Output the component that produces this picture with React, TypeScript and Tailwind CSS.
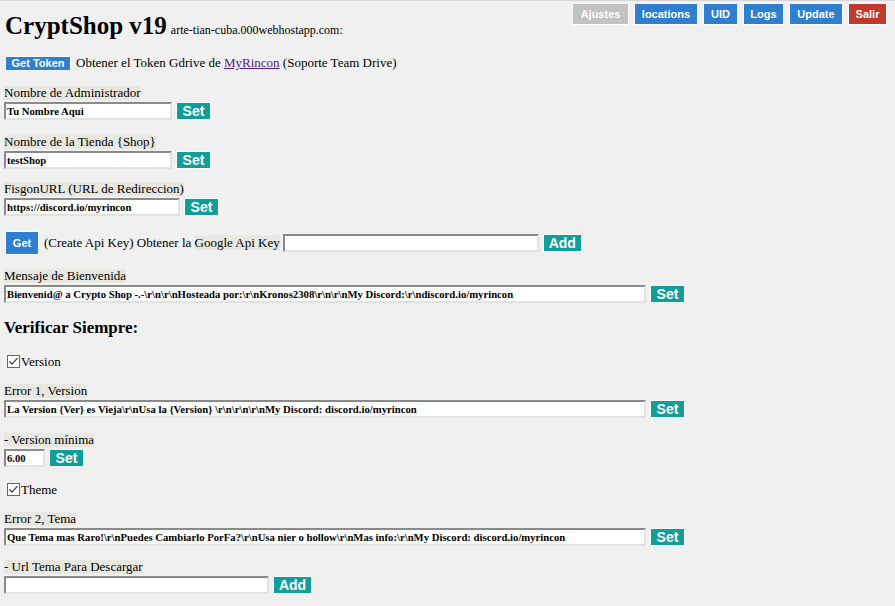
import React from 'react';

const serif = "font-['Liberation_Serif','Times_New_Roman',serif]";
const sans = "font-['Liberation_Sans',Arial,sans-serif]";

function Label({ children }: { children: React.ReactNode }) {
  return (
    <div className="h-[14px] leading-[14px]">
      <span className="bg-[#e8e8e0] inline-block">{children}</span>
    </div>
  );
}

function TextBox({ width, value }: { width: number; value: string }) {
  return (
    <div
      className="h-[18px] bg-white border-2 border-t-[#8a8a8a] border-l-[#8a8a8a] border-r-[#e2e2e2] border-b-[#e2e2e2] text-[10.7px] font-bold leading-[14px] pl-[1px] overflow-hidden whitespace-nowrap"
      style={{ width }}
    >
      {value}
    </div>
  );
}

function TealBtn({ text, w }: { text: string; w: number }) {
  return (
    <button
      className={`${sans} h-[18px] bg-[#0f9e9a] text-white text-[14px] font-bold leading-[16px] border border-white`}
      style={{ width: w }}
    >
      {text}
    </button>
  );
}

function Field({ label, width, value, btn = 'Set', btnW = 35, mt }: { label: string; width: number; value: string; btn?: string; btnW?: number; mt: string }) {
  return (
    <div className={mt}>
      <Label>{label}</Label>
      <div className="flex items-center gap-[4px] mt-[2px]">
        <TextBox width={width} value={value} />
        <TealBtn text={btn} w={btnW} />
      </div>
    </div>
  );
}

function Check({ label, mt }: { label: string; mt: string }) {
  return (
    <div className={`${mt} h-[17px] flex items-center pl-[3px] gap-[1px]`}>
      <svg width="13" height="13" viewBox="0 0 13 13">
        <rect x="0.5" y="0.5" width="12" height="12" fill="#fff" stroke="#6a6a6a" />
        <path d="M2.5 6.5 L5 9 L10.5 3.2" fill="none" stroke="#333" strokeWidth="1.1" />
      </svg>
      <span className="leading-[17px]">{label}</span>
    </div>
  );
}

const topBtns = [
  { t: 'Ajustes', c: 'bg-[#c2c2c2]', w: 57 },
  { t: 'locations', c: 'bg-[#2f7fd1]', w: 64 },
  { t: 'UID', c: 'bg-[#2f7fd1]', w: 35 },
  { t: 'Logs', c: 'bg-[#2f7fd1]', w: 41 },
  { t: 'Update', c: 'bg-[#2f7fd1]', w: 54 },
  { t: 'Salir', c: 'bg-[#c0392b]', w: 39 },
];

export default function App() {
  return (
    <div className={`${serif} min-h-[606px] bg-[#f0f0f0] border-t border-[#d6d6d6] px-[4px] text-[13px] text-black`}>
      {/* header */}
      <div className="h-[54px] flex justify-between items-start">
        <div className="pt-[10px] pl-[1px] flex items-baseline gap-[4px]">
          <h1 className="text-[25px] font-bold leading-[30px]">CryptShop v19</h1>
          <span className="text-[12px]">arte-tian-cuba.000webhostapp.com:</span>
        </div>
        <div className="flex gap-[5px] pt-[2px] pr-[4px]">
          {topBtns.map((b) => (
            <button
              key={b.t}
              className={`${sans} ${b.c} h-[22px] text-white text-[11px] font-bold border border-white`}
              style={{ width: b.w }}
            >
              {b.t}
            </button>
          ))}
        </div>
      </div>

      {/* get token */}
      <div className="h-[16px] flex items-center gap-[5px] pl-[1px]">
        <button className={`${sans} h-[15px] w-[66px] bg-[#2f7fd1] text-white text-[11px] font-bold leading-[13px] border border-white`}>
          Get Token
        </button>
        <span>
          Obtener el Token Gdrive de <a className="text-[#551a8b] underline">MyRincon</a> (Soporte Team Drive)
        </span>
      </div>

      <Field mt="mt-[15px]" label="Nombre de Administrador" width={168} value="Tu Nombre Aqui" />
      <Field mt="mt-[15px]" label="Nombre de la Tienda {Shop}" width={168} value="testShop" />
      <Field mt="mt-[13px]" label="FisgonURL (URL de Redireccion)" width={176} value="https://discord.io/myrincon" />

      {/* api key */}
      <div className="mt-[15px] h-[24px] flex items-center gap-[5px] pl-[1px]">
        <button className={`${sans} h-[24px] w-[34px] bg-[#2f7fd1] text-white text-[11px] font-bold border border-white`}>Get</button>
        <span>
          (Create Api Key) Obtener la <span className="bg-[#e8e8e0]">Google Api Key</span>
        </span>
        <div className="flex items-center gap-[4px] -ml-[2px]">
          <TextBox width={256} value="" />
          <TealBtn text="Add" w={39} />
        </div>
      </div>

      <Field
        mt="mt-[14px]"
        label="Mensaje de Bienvenida"
        width={642}
        value={'Bienvenid@ a Crypto Shop -.-\\r\\n\\r\\nHosteada por:\\r\\nKronos2308\\r\\n\\r\\nMy Discord:\\r\\ndiscord.io/myrincon'}
      />

      <h2 className="mt-[15px] text-[17px] font-bold leading-[20px]">Verificar Siempre:</h2>

      <Check mt="mt-[15px]" label="Version" />

      <Field
        mt="mt-[14px]"
        label="Error 1, Version"
        width={642}
        value={'La Version {Ver} es Vieja\\r\\nUsa la {Version} \\r\\n\\r\\n\\r\\nMy Discord: discord.io/myrincon'}
      />
      <Field mt="mt-[15px]" label="- Version mínima" width={41} value="6.00" />

      <Check mt="mt-[14px]" label="Theme" />

      <Field
        mt="mt-[14px]"
        label="Error 2, Tema"
        width={642}
        value={'Que Tema mas Raro!\\r\\nPuedes Cambiarlo PorFa?\\r\\nUsa nier o hollow\\r\\nMas info:\\r\\nMy Discord: discord.io/myrincon'}
      />
      <Field mt="mt-[14px]" label="- Url Tema Para Descargar" width={265} value="" btn="Add" btnW={39} />
    </div>
  );
}
